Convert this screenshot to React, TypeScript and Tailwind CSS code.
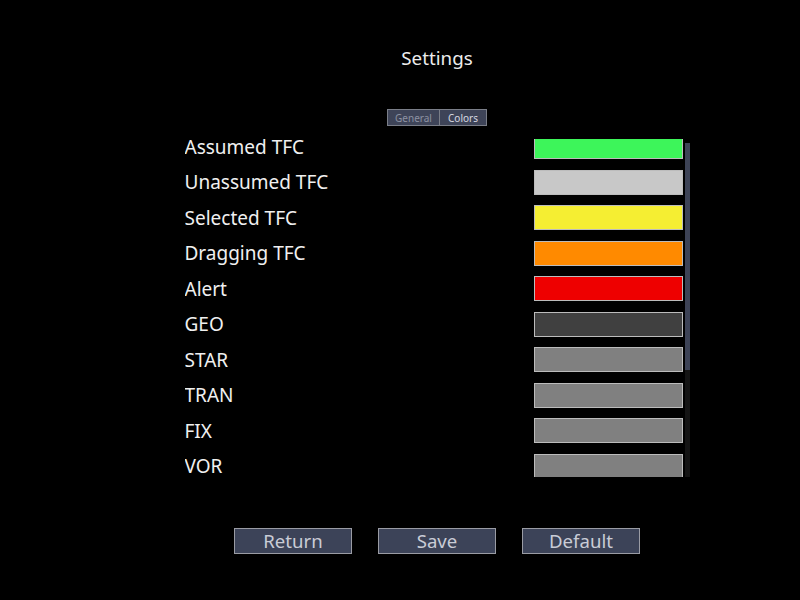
import React from "react";

const colors = [
  { label: "Assumed TFC", fill: "bg-[#3df55a]" },
  { label: "Unassumed TFC", fill: "bg-[#c8c8c8]" },
  { label: "Selected TFC", fill: "bg-[#f5ee32]" },
  { label: "Dragging TFC", fill: "bg-[#ff8a00]" },
  { label: "Alert", fill: "bg-[#ee0000]" },
  { label: "GEO", fill: "bg-[#404040]" },
  { label: "STAR", fill: "bg-[#808080]" },
  { label: "TRAN", fill: "bg-[#808080]" },
  { label: "FIX", fill: "bg-[#808080]" },
  { label: "VOR", fill: "bg-[#808080]" },
];

export default function App() {
  return (
    <div className="w-[800px] h-[600px] bg-black flex flex-col items-center pl-[74px] font-['Noto_Sans','Open_Sans',sans-serif]">
      {/* title */}
      <h1 className="mt-[45px] text-[18.8px] leading-[26px] text-[#ececec]">Settings</h1>

      {/* tabs */}
      <div className="mt-[38px] flex">
        <button className="h-[17px] w-[53px] bg-[#3e4458] border border-[#7a7e88] text-[10px] leading-none text-[#8d92a2]">
          General
        </button>
        <button className="h-[17px] w-[47px] bg-[#3e4458] border border-l-0 border-[#7a7e88] text-[10px] leading-none text-[#d6d8e0]">
          Colors
        </button>
      </div>

      {/* color list */}
      <div className="mt-[13px] w-[505px] h-[338px] flex">
        <div className="w-[498px] h-full overflow-hidden">
          <div className="-mt-[5px] flex flex-col gap-[10.5px]">
            {colors.map((c) => (
              <div key={c.label} className="h-[25px] flex items-center justify-between">
                <span className="text-[19px] leading-[14px] text-[#f0f0f0]">{c.label}</span>
                <div className={`w-[149px] h-[25px] border-[1.5px] border-[#bcbcbc] ${c.fill}`} />
              </div>
            ))}
          </div>
        </div>
        {/* scrollbar */}
        <div className="ml-[2px] mt-[4px] w-[5px] h-[334px] bg-[#141414] flex flex-col">
          <div className="h-[227px] bg-[#3d4356]" />
        </div>
      </div>

      {/* buttons */}
      <div className="mt-[51px] flex gap-[26px]">
        {["Return", "Save", "Default"].map((b) => (
          <button
            key={b}
            className="w-[118px] h-[26px] bg-[#3c4358] border border-[#9a9ca4] text-[18.6px] leading-none text-[#c9ccd6]"
          >
            {b}
          </button>
        ))}
      </div>
    </div>
  );
}
